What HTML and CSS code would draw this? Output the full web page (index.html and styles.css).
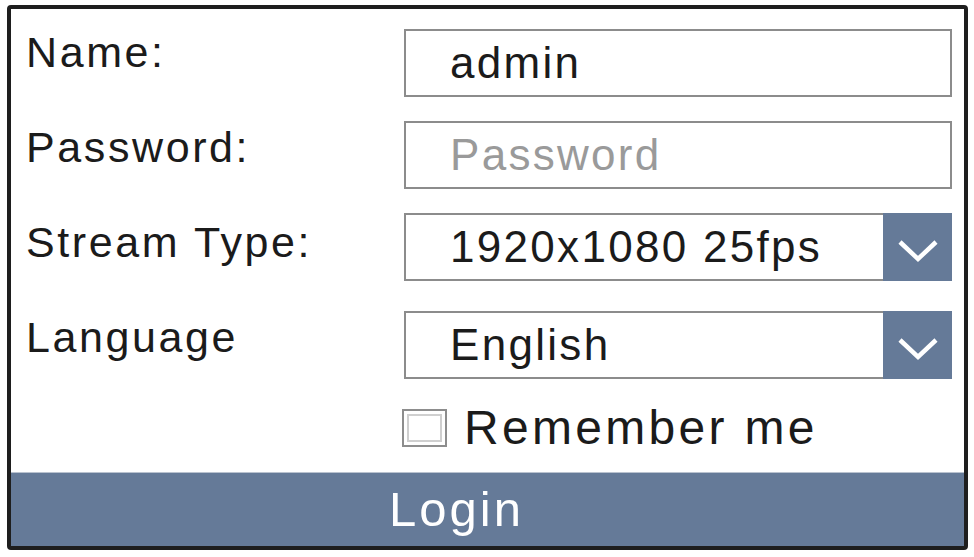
FILE: index.html
```html
<!DOCTYPE html>
<html lang="en">
<head>
<meta charset="utf-8">
<title>Login</title>
<link rel="stylesheet" href="styles.css">
</head>
<body>
<div class="panel">
  <div class="form">
    <div class="labels">
      <div class="label">Name:</div>
      <div class="label">Password:</div>
      <div class="label">Stream Type:</div>
      <div class="label">Language</div>
    </div>
    <div class="fields">
      <div class="input"><span class="value">admin</span></div>
      <div class="input"><span class="placeholder">Password</span></div>
      <div class="select">
        <div class="select-text"><span class="value">1920x1080 25fps</span></div>
        <div class="select-btn">
          <svg width="69" height="68" viewBox="0 0 69 68"><polyline points="17,29 35,46 53,29" fill="none" stroke="#ffffff" stroke-width="4.5"/></svg>
        </div>
      </div>
      <div class="select spaced">
        <div class="select-text"><span class="value">English</span></div>
        <div class="select-btn">
          <svg width="69" height="68" viewBox="0 0 69 68"><polyline points="17,29 35,46 53,29" fill="none" stroke="#ffffff" stroke-width="4.5"/></svg>
        </div>
      </div>
      <div class="remember">
        <span class="checkbox"><span class="checkbox-inner"></span></span>
        <span class="remember-text">Remember me</span>
      </div>
    </div>
  </div>
  <div class="login">Login</div>
</div>
</body>
</html>
```

FILE: styles.css
```css
* { box-sizing: border-box; }
html, body { margin: 0; padding: 0; background: #ffffff; }
body {
  font-family: "Liberation Sans", Arial, sans-serif;
  color: #1b1b1b;
}
.panel {
  margin: 5px 0 0 7px;
  width: 961px;
  height: 545px;
  border: 4px solid #1e1e1e;
  border-radius: 4px;
  display: flex;
  flex-direction: column;
  overflow: hidden;
}
.form {
  display: grid;
  grid-template-columns: 378px 548px;
  padding: 0 12px 0 15px;
  flex: 1;
}
.labels {
  display: flex;
  flex-direction: column;
  gap: 51px;
  padding-top: 21px;
}
.label {
  font-size: 43px;
  line-height: 44px;
  letter-spacing: 2.6px;
  white-space: nowrap;
}
.fields {
  display: flex;
  flex-direction: column;
  gap: 24px;
  padding-top: 20px;
}
.spaced { margin-top: 6px; }
.input {
  height: 68px;
  border: 2px solid #8c8c8c;
  display: flex;
  align-items: center;
  padding-left: 44px;
}
.value, .placeholder {
  font-size: 44px;
  letter-spacing: 2.3px;
  line-height: 1;
  white-space: nowrap;
}
.placeholder { color: #9a9a9a; }
.select {
  height: 68px;
  display: flex;
}
.select-text {
  width: 480px;
  height: 68px;
  border: 2px solid #8c8c8c;
  border-right: none;
  display: flex;
  align-items: center;
  padding-left: 44px;
}
.select-btn {
  width: 69px;
  height: 68px;
  background: #657a98;
}
.select-btn svg { display: block; }
.remember {
  display: flex;
  align-items: center;
  margin-left: -2px;
  margin-top: 1px;
  gap: 17px;
}
.checkbox {
  width: 45px;
  height: 38px;
  border: 2px solid #8d8d8d;
  padding: 3px;
  display: block;
}
.checkbox-inner {
  display: block;
  width: 100%;
  height: 100%;
  border: 2px solid #cfcfcf;
}
.remember-text {
  font-size: 48px;
  letter-spacing: 3.3px;
  line-height: 1;
  white-space: nowrap;
}
.login {
  height: 74px;
  background: #657a98;
  border-top: 1px solid #b9c2cf;
  color: #ffffff;
  font-size: 49px;
  letter-spacing: 3px;
  display: flex;
  align-items: center;
  padding-left: 378px;
  line-height: 1;
}
```
